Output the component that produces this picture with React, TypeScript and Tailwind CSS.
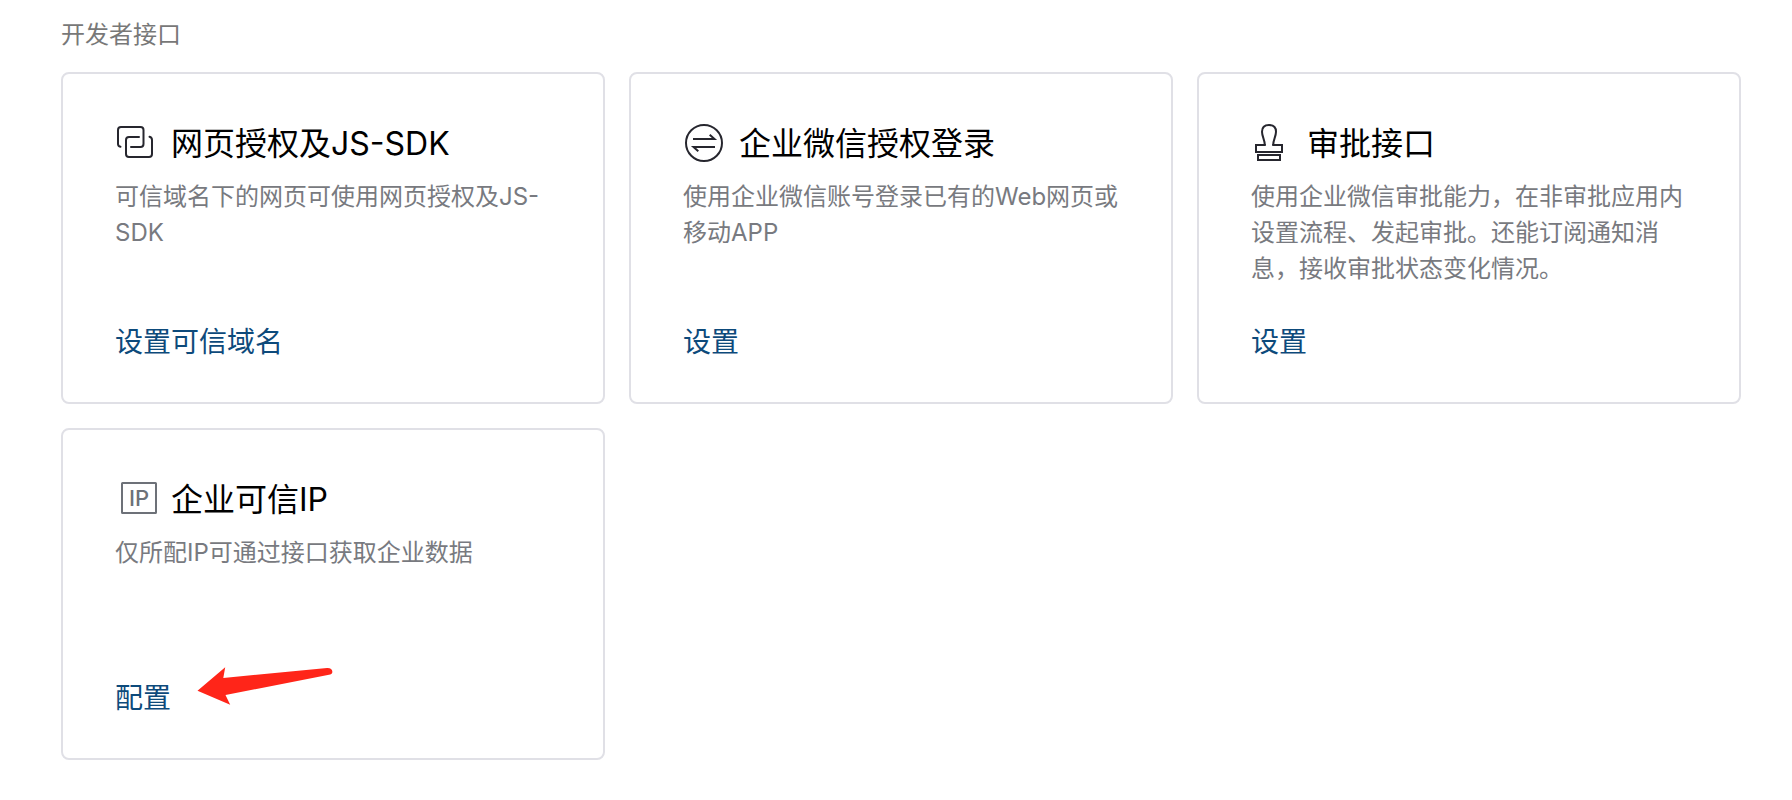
import type { ReactNode } from "react"

function LinkIcon() {
  return (
    <svg width="44" height="42" viewBox="0 0 44 42" fill="none" stroke="#26262e" strokeWidth="2" strokeLinecap="round" aria-hidden="true">
      <path d="M5.5 23.8C3.8 23.4 3 22.6 3 21V7a3 3 0 0 1 3-3h19.5a3 3 0 0 1 3 3v14a3 3 0 0 1-3 3H16" />
      <path d="M24 14H14a3 3 0 0 0-3 3v14a3 3 0 0 0 3 3h20a3 3 0 0 0 3-3V17c0-1.7-.8-2.7-2.5-3.2" />
    </svg>
  )
}

function SwapIcon() {
  return (
    <svg width="44" height="42" viewBox="0 0 44 42" fill="none" stroke="#26262e" strokeWidth="2" aria-hidden="true">
      <circle cx="21" cy="20" r="18" />
      <path d="M10 16h21.5l-4.8-4.3M32 24H10.5l4.8 4.3" />
    </svg>
  )
}

function StampIcon() {
  return (
    <svg width="44" height="42" viewBox="0 0 44 42" fill="none" stroke="#26262e" strokeWidth="2" aria-hidden="true">
      <path d="M13.8 22C13.8 17 11 13.5 11 8.8C11 4.5 13.8 2 18 2C22.2 2 25 4.5 25 8.8C25 13.5 22.2 17 22.2 22" />
      <path d="M14.8 22H5v7h26v-7h-9.800" />
      <rect x="7" y="32" width="22" height="5" />
    </svg>
  )
}

function IpIcon() {
  return (
    <svg width="44" height="42" viewBox="0 0 44 42" fill="none" stroke="#6d7178" strokeWidth="2" aria-hidden="true">
      <rect x="7" y="4" width="34" height="30" rx="0.5" />
      <text x="24" y="27" textAnchor="middle" fontSize="22" fontWeight="500" fill="#6d7178" stroke="none">
        IP
      </text>
    </svg>
  )
}

function RedArrow() {
  return (
    <svg
      className="pointer-events-none absolute -top-3 left-full ml-[25px]"
      width="138"
      height="40"
      viewBox="0 0 138 40"
      fill="#ff2519"
      aria-hidden="true"
    >
      <path d="M1.5 24.7L29.2 1.3L27.3 12L131 2C135 1.7 137.3 4.5 136 7.3C135.5 8.3 134.5 8.5 133 8.8L29.5 29L34.2 38.7Z" />
    </svg>
  )
}

type Item = {
  title: string
  desc: string
  action: string
  icon: ReactNode
  marked?: boolean
}

const items: Item[] = [
  {
    title: "网页授权及JS-SDK",
    desc: "可信域名下的网页可使用网页授权及JS-SDK",
    action: "设置可信域名",
    icon: <LinkIcon />,
  },
  {
    title: "企业微信授权登录",
    desc: "使用企业微信账号登录已有的Web网页或移动APP",
    action: "设置",
    icon: <SwapIcon />,
  },
  {
    title: "审批接口",
    desc: "使用企业微信审批能力，在非审批应用内设置流程、发起审批。还能订阅通知消息，接收审批状态变化情况。",
    action: "设置",
    icon: <StampIcon />,
  },
  {
    title: "企业可信IP",
    desc: "仅所配IP可通过接口获取企业数据",
    action: "配置",
    icon: <IpIcon />,
    marked: true,
  },
]

function Card({ title, desc, action, icon, marked }: Item) {
  return (
    <section className="rounded-lg border-2 border-[#e0e0e6] pt-12 pr-12 pb-10 pl-[52px]">
      <div className="flex items-center gap-3">
        {icon}
        <h2 className="text-[32px] leading-[44px] text-black">{title}</h2>
      </div>
      <p className="mt-[13px] min-h-[108px] text-2xl leading-9 text-[#787a80]">{desc}</p>
      <div className="relative mt-[35px] w-fit">
        <a href="#" className="block text-[28px] leading-10 text-[#0d4a7b]">
          {action}
        </a>
        {marked && <RedArrow />}
      </div>
    </section>
  )
}

export default function App() {
  return (
    <main
      lang="zh-CN"
      className="min-h-screen bg-white pt-[17px] pr-[51px] pb-10 pl-[61px] font-['Inter','Noto_Sans_CJK_SC',sans-serif]"
    >
      <h1 className="mb-[19px] text-2xl leading-9 text-[#787878]">开发者接口</h1>
      <div className="grid grid-cols-1 gap-6 md:grid-cols-2 xl:grid-cols-3">
        {items.map((item) => (
          <Card key={item.title} {...item} />
        ))}
      </div>
    </main>
  )
}
